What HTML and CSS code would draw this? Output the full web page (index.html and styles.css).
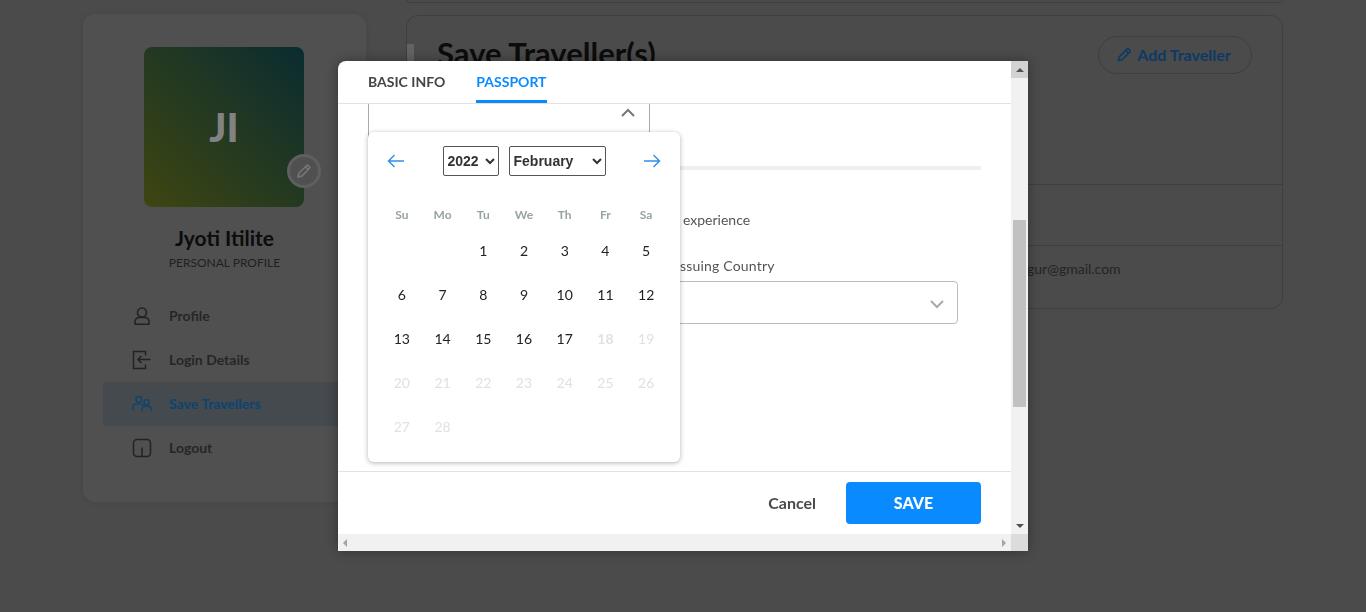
FILE: index.html
```html
<!DOCTYPE html>
<html lang="en">
<head>
    <meta charset="UTF-8">
    <meta name="viewport" content="width=device-width, initial-scale=1.0">
    <title>Save Travellers</title>
    <link rel="stylesheet" href="styles.css">
</head>
<body>
    <div class="page">
        <aside class="sidebar">
            <div class="avatar">
                <span class="initials">JI</span>
                <span class="avatar-edit">
                    <svg width="16" height="16" viewBox="0 0 16 16" fill="none" stroke="#777" stroke-width="1.600" stroke-linejoin="round"><path d="M2 14l.9-3.700 7.800-7.800a1 1 0 0 1 1.400 0l1.400 1.400a1 1 0 0 1 0 1.400l-7.800 7.800z"/><path d="M9.500 3.700l2.800 2.800"/></svg>
                </span>
            </div>
            <h2 class="name">Jyoti Itilite</h2>
            <p class="profile-type">PERSONAL PROFILE</p>
            <ul class="menu">
                <li class="menu-item">
                    <svg width="20" height="20" viewBox="0 0 20 20" fill="none" stroke="#222" stroke-width="1.600"><circle cx="10" cy="6.500" r="4.500"/><path d="M3 18.200v-2.400c0-2.600 2-4.300 4.400-4.300h5.200c2.400 0 4.400 1.700 4.400 4.300v2.400z" stroke-linejoin="round"/></svg>
                    Profile
                </li>
                <li class="menu-item">
                    <svg width="20" height="20" viewBox="0 0 20 20" fill="none" stroke="#222" stroke-width="1.500"><path d="M13.500 5.500V1.500H1.500v17h12v-4"/><path d="M18.500 9.500H6M9.500 6l-3.500 3.500 3.500 3.500"/></svg>
                    Login Details
                </li>
                <li class="menu-item is-active">
                    <svg width="22" height="20" viewBox="0 0 22 20" fill="none" stroke="#0a4472" stroke-width="1.500"><circle cx="7.500" cy="5" r="3.200"/><path d="M1 17v-3.400c0-2 1.500-3.400 3.500-3.400h5c1.500 0 2.700.8 3.200 2"/><circle cx="16" cy="8" r="2.800"/><path d="M11 18v-2.500c0-1.700 1.300-3 3-3h4c1.700 0 3 1.300 3 3V18"/></svg>
                    Save Travellers
                </li>
                <li class="menu-item">
                    <svg width="20" height="20" viewBox="0 0 20 20" fill="none" stroke="#222" stroke-width="1.500"><rect x="1.500" y="1.500" width="17" height="17" rx="3.500"/><path d="M10 9.500v9"/></svg>
                    Logout
                </li>
            </ul>
        </aside>

        <main class="content">
            <div class="top-card"></div>
            <section class="card">
                <div class="card-head">
                    <span class="title-mark"></span>
                    <h1 class="card-title">Save Traveller(s)</h1>
                    <button class="add-btn" type="button">
                        <svg width="15" height="15" viewBox="0 0 16 16" fill="none" stroke="#0b3a66" stroke-width="1.700" stroke-linejoin="round"><path d="M1.500 14.500l.9-3.900 8.300-8.300a1.200 1.200 0 0 1 1.700 0l1.300 1.300a1.200 1.200 0 0 1 0 1.700l-8.300 8.300z"/><path d="M9.300 3.700l3 3"/></svg>
                        Add Traveller
                    </button>
                </div>
                <div class="card-row"></div>
                <div class="card-row card-row-email">gur@gmail.com</div>
            </section>
        </main>
    </div>

    <div class="modal">
        <div class="modal-main">
            <nav class="tabs">
                <span class="tab">BASIC INFO</span>
                <span class="tab is-active">PASSPORT</span>
            </nav>
            <div class="modal-body">
                <div class="date-box">
                    <svg class="chevron" width="16" height="10" viewBox="0 0 16 10" fill="none" stroke="#777" stroke-width="2"><path d="M2 8l6-6 6 6"/></svg>
                </div>
                <div class="rule"></div>
                <p class="note">experience</p>
                <div class="country">
                    <label class="country-label">Issuing Country</label>
                    <div class="country-box">
                        <svg width="16" height="10" viewBox="0 0 16 10" fill="none" stroke="#aaa" stroke-width="2"><path d="M2 2l6 6 6-6"/></svg>
                    </div>
                </div>
            </div>
            <div class="modal-foot">
                <button class="cancel-btn" type="button">Cancel</button>
                <button class="save-btn" type="button">SAVE</button>
            </div>

            <div class="calendar">
                <div class="cal-nav">
                    <svg width="18" height="14" viewBox="0 0 18 14" fill="none" stroke="#2f8fe8" stroke-width="1.400"><path d="M17 7H1.500M7.500 1l-6 6 6 6"/></svg>
                    <div class="cal-selects">
                        <select class="cal-select cal-year"><option>2022</option></select>
                        <select class="cal-select cal-month"><option>February</option></select>
                    </div>
                    <svg width="18" height="14" viewBox="0 0 18 14" fill="none" stroke="#2f8fe8" stroke-width="1.400"><path d="M1 7h15.500M10.500 1l6 6-6 6"/></svg>
                </div>
                <div class="cal-grid">
                    <span class="wd">Su</span><span class="wd">Mo</span><span class="wd">Tu</span><span class="wd">We</span><span class="wd">Th</span><span class="wd">Fr</span><span class="wd">Sa</span>
                    <span></span><span></span><span>1</span><span>2</span><span>3</span><span>4</span><span>5</span>
                    <span>6</span><span>7</span><span>8</span><span>9</span><span>10</span><span>11</span><span>12</span>
                    <span>13</span><span>14</span><span>15</span><span>16</span><span>17</span><span class="off today">18</span><span class="off">19</span>
                    <span class="off">20</span><span class="off">21</span><span class="off">22</span><span class="off">23</span><span class="off">24</span><span class="off">25</span><span class="off">26</span>
                    <span class="off">27</span><span class="off">28</span>
                </div>
            </div>
        </div>

        <div class="vbar">
            <span class="vbar-btn vbar-up"><i class="arrow arrow-up"></i></span>
            <span class="vbar-track"><span class="vbar-thumb"></span></span>
            <span class="vbar-btn"><i class="arrow arrow-down"></i></span>
        </div>
        <div class="hbar">
            <i class="arrow arrow-left"></i>
            <i class="arrow arrow-right"></i>
        </div>
        <div class="bar-corner"></div>
    </div>
</body>
</html>
```

FILE: styles.css
```css
html, body {
    margin: 0;
    padding: 0;
    height: 100%;
}

body {
    font-family: Lato, "Open Sans", sans-serif;
    background-color: #4b4b4b;
    overflow: hidden;
}

.page {
    display: flex;
    gap: 40px;
    height: 612px;
    padding-left: 83px;
    box-sizing: border-box;
}

/* sidebar */
.sidebar {
    width: 283px;
    height: 488px;
    margin-top: 14px;
    padding-top: 33px;
    box-sizing: border-box;
    background-color: #505050;
    border-radius: 12px;
    flex-shrink: 0;
    box-shadow: 0 0 6px rgba(0, 0, 0, 0.08);
}

.avatar {
    position: relative;
    width: 160px;
    height: 160px;
    margin-left: 61px;
    border-radius: 8px;
    background: linear-gradient(to top right, #3e4611, #0a2c30);
    display: flex;
    align-items: center;
    justify-content: center;
}

.initials {
    font-size: 40px;
    font-weight: 900;
    color: #828282;
}

.avatar-edit {
    position: absolute;
    right: -17px;
    bottom: 19px;
    width: 28px;
    height: 28px;
    border: 3px solid #5f5f5f;
    border-radius: 50%;
    background-color: #505050;
    display: flex;
    align-items: center;
    justify-content: center;
}

.name {
    margin: 19px 0 0;
    font-size: 21px;
    line-height: 24px;
    font-weight: 700;
    text-align: center;
    color: #0c0c0c;
}

.profile-type {
    margin: 6px 0 0;
    font-size: 12px;
    line-height: 14px;
    text-align: center;
    color: #1f1f1f;
}

.menu {
    list-style-type: none;
    margin: 24px 0 0 20px;
    padding: 0;
}

.menu-item {
    display: flex;
    align-items: center;
    gap: 17px;
    height: 44px;
    padding: 0 0 2px 29px;
    box-sizing: border-box;
    font-size: 14px;
    font-weight: 700;
    color: #262626;
}

.menu-item svg {
    width: 20px;
    margin-top: 2px;
    flex-shrink: 0;
}

.menu-item.is-active {
    background-color: #454a4f;
    color: #0a4472;
    border-radius: 4px;
}

/* main content */
.content {
    width: 877px;
    flex-shrink: 0;
}

.top-card {
    height: 2px;
    border: 1px solid #3f3f3f;
    border-top: none;
    border-radius: 0 0 10px 10px;
}

.card {
    margin-top: 12px;
    height: 294px;
    box-sizing: border-box;
    border: 1px solid #3f3f3f;
    border-radius: 12px;
}

.card-head {
    display: flex;
    align-items: flex-start;
    height: 169px;
    border-bottom: 1px solid #3f3f3f;
    box-sizing: border-box;
}

.title-mark {
    width: 7px;
    height: 60px;
    margin-top: 28px;
    margin-right: 23px;
    background-color: #636363;
}

.card-title {
    margin: 16px 0 0;
    font-size: 31px;
    line-height: 42px;
    font-weight: 700;
    color: #0c0c0c;
    flex: 1;
}

.add-btn {
    display: flex;
    align-items: center;
    justify-content: center;
    gap: 5px;
    width: 154px;
    height: 38px;
    margin: 20px 30px 0 0;
    padding: 0 2px 2px 0;
    font-family: inherit;
    font-size: 16px;
    font-weight: 700;
    color: #0b3a66;
    background: none;
    border: 1px solid #3f3f3f;
    border-radius: 19px;
}

.card-row {
    height: 61px;
    box-sizing: border-box;
    border-bottom: 1px solid #3f3f3f;
}

.card-row-email {
    height: auto;
    border-bottom: none;
    padding: 13px 0 0 620px;
    font-size: 14px;
    line-height: 20px;
    color: #242424;
}

/* modal */
.modal {
    position: fixed;
    left: 338px;
    top: 61px;
    width: 690px;
    height: 490px;
    display: grid;
    grid-template-columns: 673px 17px;
    grid-template-rows: 473px 17px;
    background-color: #fff;
    border-top-left-radius: 8px;
    box-shadow: 0 0 12px rgba(0, 0, 0, 0.35);
}

.modal-main {
    position: relative;
    display: flex;
    flex-direction: column;
}

.tabs {
    display: flex;
    gap: 31px;
    height: 43px;
    padding-left: 30px;
    box-sizing: border-box;
    border-bottom: 1px solid #e2e2e2;
}

.tab {
    padding-top: 12px;
    height: 42px;
    box-sizing: border-box;
    font-size: 14px;
    line-height: 18px;
    font-weight: 700;
    color: #444;
}

.tab.is-active {
    color: #0a8aff;
    border-bottom: 3px solid #0a8aff;
}

.modal-body {
    flex: 1;
    padding: 0 30px;
    overflow: hidden;
}

.date-box {
    width: 282px;
    height: 40px;
    box-sizing: border-box;
    border: 1px solid #aaa;
    border-top: none;
    padding: 4px 13px 0 0;
    display: flex;
    justify-content: flex-end;
    align-items: flex-start;
}

.rule {
    height: 4px;
    margin-top: 22px;
    background-color: #efefef;
}

.note {
    margin: 40px 0 0 315px;
    font-size: 14px;
    line-height: 20px;
    color: #555;
}

.country {
    margin: 26px 0 0 308px;
    width: 282px;
}

.country-label {
    display: block;
    font-size: 14px;
    line-height: 20px;
    letter-spacing: 0.2px;
    color: #555;
}

.country-box {
    height: 43px;
    margin-top: 5px;
    box-sizing: border-box;
    border: 1px solid #bbb;
    border-radius: 4px;
    padding: 2px 12px 0 0;
    display: flex;
    align-items: center;
    justify-content: flex-end;
}

.modal-foot {
    height: 63px;
    box-sizing: border-box;
    border-top: 1px solid #e2e2e2;
    padding: 10px 30px 0 0;
    display: flex;
    justify-content: flex-end;
    gap: 30px;
}

.cancel-btn {
    height: 42px;
    padding: 0 0 2px;
    font-family: inherit;
    font-size: 16px;
    font-weight: 700;
    color: #4a4a4a;
    background: none;
    border: none;
}

.save-btn {
    width: 135px;
    height: 42px;
    padding: 0 0 2px;
    font-family: inherit;
    font-size: 16px;
    font-weight: 900;
    color: #fff;
    background-color: #0a8aff;
    border: none;
    border-radius: 4px;
}

/* calendar popup */
.calendar {
    position: absolute;
    left: 30px;
    top: 71px;
    width: 312px;
    height: 330px;
    box-sizing: border-box;
    padding: 14px 13.5px 0;
    background-color: #fff;
    border-radius: 6px;
    box-shadow: 0 1px 5px rgba(0, 0, 0, 0.3);
}

.cal-nav {
    display: flex;
    align-items: center;
    justify-content: space-between;
    height: 30px;
    padding: 0 5.5px;
}

.cal-selects {
    display: flex;
    gap: 10px;
}

.cal-select {
    height: 30px;
    font-family: "Liberation Sans", Arial, sans-serif;
    font-size: 14px;
    font-weight: 700;
    color: #333;
    background-color: #fff;
    border: 1px solid #555;
    border-radius: 2px;
}

.cal-year {
    width: 56px;
}

.cal-month {
    width: 97px;
}

.cal-grid {
    display: grid;
    grid-template-columns: repeat(7, 1fr);
    grid-template-rows: 28px;
    grid-auto-rows: 44px;
    margin-top: 24px;
    font-size: 14px;
    color: #222;
}

.cal-grid span {
    display: flex;
    align-items: center;
    justify-content: center;
}

.cal-grid .wd {
    font-size: 12px;
    font-weight: 700;
    color: #98a3a3;
}

.cal-grid .off {
    color: #dfe2e2;
}

.cal-grid .today {
    font-weight: 700;
}

/* fake browser scrollbars */
.vbar {
    display: flex;
    flex-direction: column;
    background-color: #f1f1f1;
}

.vbar-btn {
    height: 17px;
    display: flex;
    align-items: center;
    justify-content: center;
}

.vbar-up {
    background-color: #d2d2d2;
}

.vbar-track {
    flex: 1;
    padding: 142px 2px 0;
}

.vbar-thumb {
    display: block;
    height: 187px;
    background-color: #c1c1c1;
}

.hbar {
    display: flex;
    align-items: center;
    justify-content: space-between;
    padding: 0 5px;
    background-color: #f1f1f1;
}

.bar-corner {
    background-color: #dcdcdc;
}

.arrow {
    display: block;
    width: 0;
    height: 0;
    border: 4px solid transparent;
}

.arrow-up {
    border-top: none;
    border-bottom-color: #505050;
}

.arrow-down {
    border-bottom: none;
    border-top-color: #505050;
}

.arrow-left {
    border-left: none;
    border-right-color: #a3a3a3;
}

.arrow-right {
    border-right: none;
    border-left-color: #a3a3a3;
}
```
